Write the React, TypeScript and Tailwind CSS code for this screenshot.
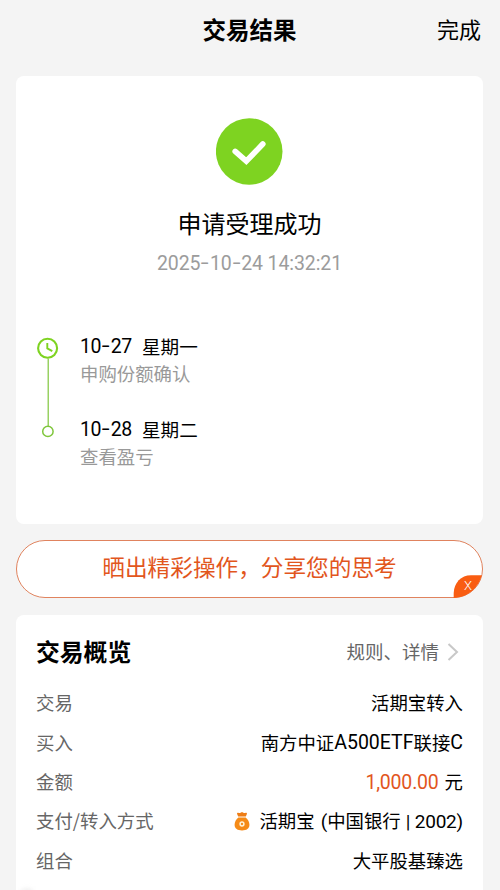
import type { ReactNode } from 'react';

function Num({ children, className = '' }: { children: ReactNode; className?: string }) {
  return <span className={`font-['Roboto','Noto_Sans_CJK_SC',sans-serif] ${className}`}>{children}</span>;
}

/* Dates use a wide, slightly raised hyphen between their parts. */
function DateText({ value }: { value: string }) {
  return (
    <>
      {value.split('-').map((part, i) => (
        <span key={i}>
          {i > 0 && <span className="inline-block w-[9.5px] origin-center -translate-y-px scale-x-[1.45] text-center tracking-normal">-</span>}
          {part}
        </span>
      ))}
    </>
  );
}

function SuccessIcon() {
  return (
    <svg className="block h-[67px] w-[67px]" viewBox="0 0 67 67" fill="none">
      <circle cx="33.2" cy="33.5" r="33.3" fill="#7ed321" />
      <path d="M19.2 33.4 L30.3 43.2 L46.8 26" stroke="#fff" strokeWidth="5.6" strokeLinecap="round" strokeLinejoin="miter" />
    </svg>
  );
}

function Timeline() {
  return (
    <svg className="block h-[104px] w-6 shrink-0" viewBox="0 0 24 104" fill="none">
      <circle cx="11.6" cy="12.2" r="9.5" stroke="#7ed321" strokeWidth="2.1" />
      <path d="M11.3 7 V12.4 L16.3 15.2" stroke="#7ed321" strokeWidth="1.9" />
      <path d="M12.2 22.5 V90" stroke="#7fc63c" strokeWidth="1.2" />
      <circle cx="11.9" cy="95.4" r="5.2" stroke="#7fc63c" strokeWidth="1.5" />
    </svg>
  );
}

function MoneyBag() {
  return (
    <svg className="block h-[19px] w-4" viewBox="0 0 16 19">
      <path d="M4.2 4.4 L3.1 1.9 C2.8 .9 3.8 .5 4.8 .9 C6 1.3 6.8 .2 8 .2 C9.2 .2 10 1.3 11.2 .9 C12.2 .5 13.2 .9 12.9 1.9 L11.8 4.4 Z" fill="#ee7d16" />
      <path d="M4.4 5.4 H11.6 C14 7.3 15.4 10 15.4 12.8 C15.4 16.8 12.5 18.4 8 18.4 C3.5 18.4 .6 16.8 .6 12.8 C.6 10 2 7.3 4.4 5.4 Z" fill="#f58b18" />
      <circle cx="8" cy="12" r="1.9" fill="#f58b18" stroke="#fff3d8" strokeWidth="1.5" />
    </svg>
  );
}

function Step({ date, day, note }: { date: string; day: string; note: string }) {
  return (
    <div className="h-[83px]">
      <div className="flex h-7 items-center text-[18.6px] leading-7 text-black">
        <Num className="w-[62px] pt-[2px] text-[19.5px] tracking-[-0.4px]">
          <DateText value={date} />
        </Num>
        <span className="-mt-px">{day}</span>
      </div>
      <div className="-mt-px h-7 text-[18.4px] leading-7 text-[#999]">{note}</div>
    </div>
  );
}

function Row({ label, children }: { label: string; children: ReactNode }) {
  return (
    <div className="flex h-[39.3px] items-center justify-between whitespace-nowrap text-[18.4px] leading-[39px]">
      <span className="text-[#666]">{label}</span>
      <span className="flex items-center text-black">{children}</span>
    </div>
  );
}

export default function App() {
  return (
    <div className="h-[890px] w-full overflow-hidden bg-[#f4f4f4] pr-[17px] pl-4 font-['Noto_Sans_CJK_SC',sans-serif]">
      <header className="grid h-[76px] grid-cols-3 pt-[9px] leading-10 text-black">
        <h1 className="col-start-2 text-center text-[23.5px] font-bold">交易结果</h1>
        <span className="-mt-px pr-[2px] text-right text-[22px]">完成</span>
      </header>

      <section className="flex h-[448px] flex-col items-center rounded-lg bg-white pt-[42px]">
        <SuccessIcon />
        <h2 className="mt-[18px] text-[24px] leading-10 text-black">申请受理成功</h2>
        <Num className="mt-[5px] text-[19.5px] leading-8 tracking-[-0.1px] text-[#9c9c9c]">
          <DateText value="2025-10-24 14:32:21" />
        </Num>
        <div className="mt-[52px] flex w-full pl-5">
          <div className="pt-[4px]">
            <Timeline />
          </div>
          <div className="pl-5">
            <Step date="10-27" day="星期一" note="申购份额确认" />
            <Step date="10-28" day="星期二" note="查看盈亏" />
          </div>
        </div>
      </section>

      <section className="relative mt-4 h-[58px] rounded-full border border-[#e0835e] bg-white text-center text-[22.65px] leading-[52px] text-[#e2561d]">
        晒出精彩操作，分享您的思考
        <svg className="absolute -right-px -bottom-px h-[25px] w-[31px]" viewBox="0 0 31 25">
          <path d="M1.7 25 V20 C2 10 9 2.3 19 2.3 H29.8 C26.5 14.5 16 24.5 1.7 25 Z" fill="#f95d12" />
        </svg>
        <Num className="absolute right-[10px] bottom-px text-[13px] leading-5 font-light text-white">X</Num>
      </section>

      <section className="mt-[17px] h-[320px] rounded-t-lg bg-white px-5 pt-[13px]">
        <div className="mb-[9.2px] flex h-[46px] items-center justify-between">
          <h2 className="text-[23.8px] font-bold text-black">交易概览</h2>
          <div className="flex items-center gap-2 text-[18.5px] text-[#666]">
            <span className="pt-px">规则、详情</span>
            <svg className="mr-[4px] mt-[2px] block h-[18px] w-3" viewBox="0 0 12 18" fill="none" stroke="#c8c8c8" strokeWidth="2">
              <path d="M1.5 1 L10 9 L1.5 17" />
            </svg>
          </div>
        </div>
        <Row label="交易">活期宝转入</Row>
        <Row label="买入">
          南方中证<Num className="pt-px text-[19.5px]">A500ETF</Num>联接<Num className="pt-px text-[19.5px]">C</Num>
        </Row>
        <Row label="金额">
          <Num className="mr-[6px] pt-[2px] text-[19.5px] tracking-[-0.2px] text-[#e2561d]">1,000.00</Num>元
        </Row>
        <Row label="支付/转入方式">
          <span className="mr-[9px] pt-px"><MoneyBag /></span>
          活期宝<Num className="ml-[6px] pt-px text-[19px]">(</Num>中国银行<Num className="ml-[5px] pt-px text-[19px] tracking-[-0.2px]">| 2002)</Num>
        </Row>
        <Row label="组合">大平股基臻选</Row>
        <div className="mt-[8px] ml-[-17px] h-4 w-4 rounded-full bg-[#f1f1f1] blur-[2px]" />
      </section>
    </div>
  );
}
